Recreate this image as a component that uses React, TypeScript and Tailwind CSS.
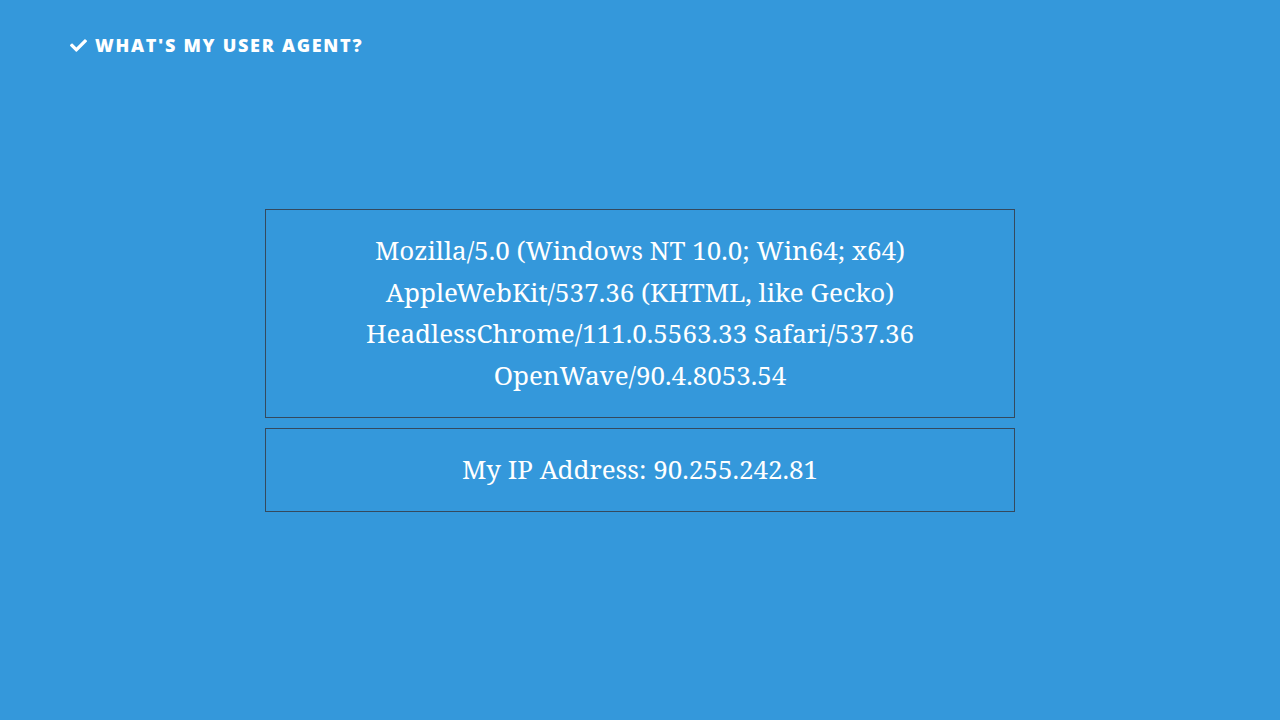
import { FaCheck } from 'react-icons/fa';

export default function App() {
  return (
    <div className="min-h-screen w-full bg-[#3498db] text-white">
      {/* Header */}
      <header className="px-[70px] pt-[33px]">
        <h1 className="flex items-center gap-[8px] text-[18px] font-extrabold leading-[24px] tracking-[0.095em] font-['Open_Sans',sans-serif]">
          <FaCheck className="w-[17px] h-[17px]" />
          <span>WHAT&apos;S MY USER AGENT?</span>
        </h1>
      </header>

      <main className="flex flex-col items-center pt-[152px] gap-[10px] font-['Noto_Serif','DejaVu_Serif',serif]">
        <div className="w-[750px] border border-[#34495e] px-5 pt-[20px] pb-[21px] text-center text-[26px] leading-[1.6]">
          Mozilla/5.0 (Windows NT 10.0; Win64; x64)
          <br />
          AppleWebKit/537.36 (KHTML, like Gecko)
          <br />
          HeadlessChrome/111.0.5563.33 Safari/537.36
          <br />
          OpenWave/90.4.8053.54
        </div>
        <div className="w-[750px] border border-[#34495e] px-5 py-[20px] text-center text-[26px] leading-[1.6]">
          My IP Address: 90.255.242.81
        </div>
      </main>
    </div>
  );
}
